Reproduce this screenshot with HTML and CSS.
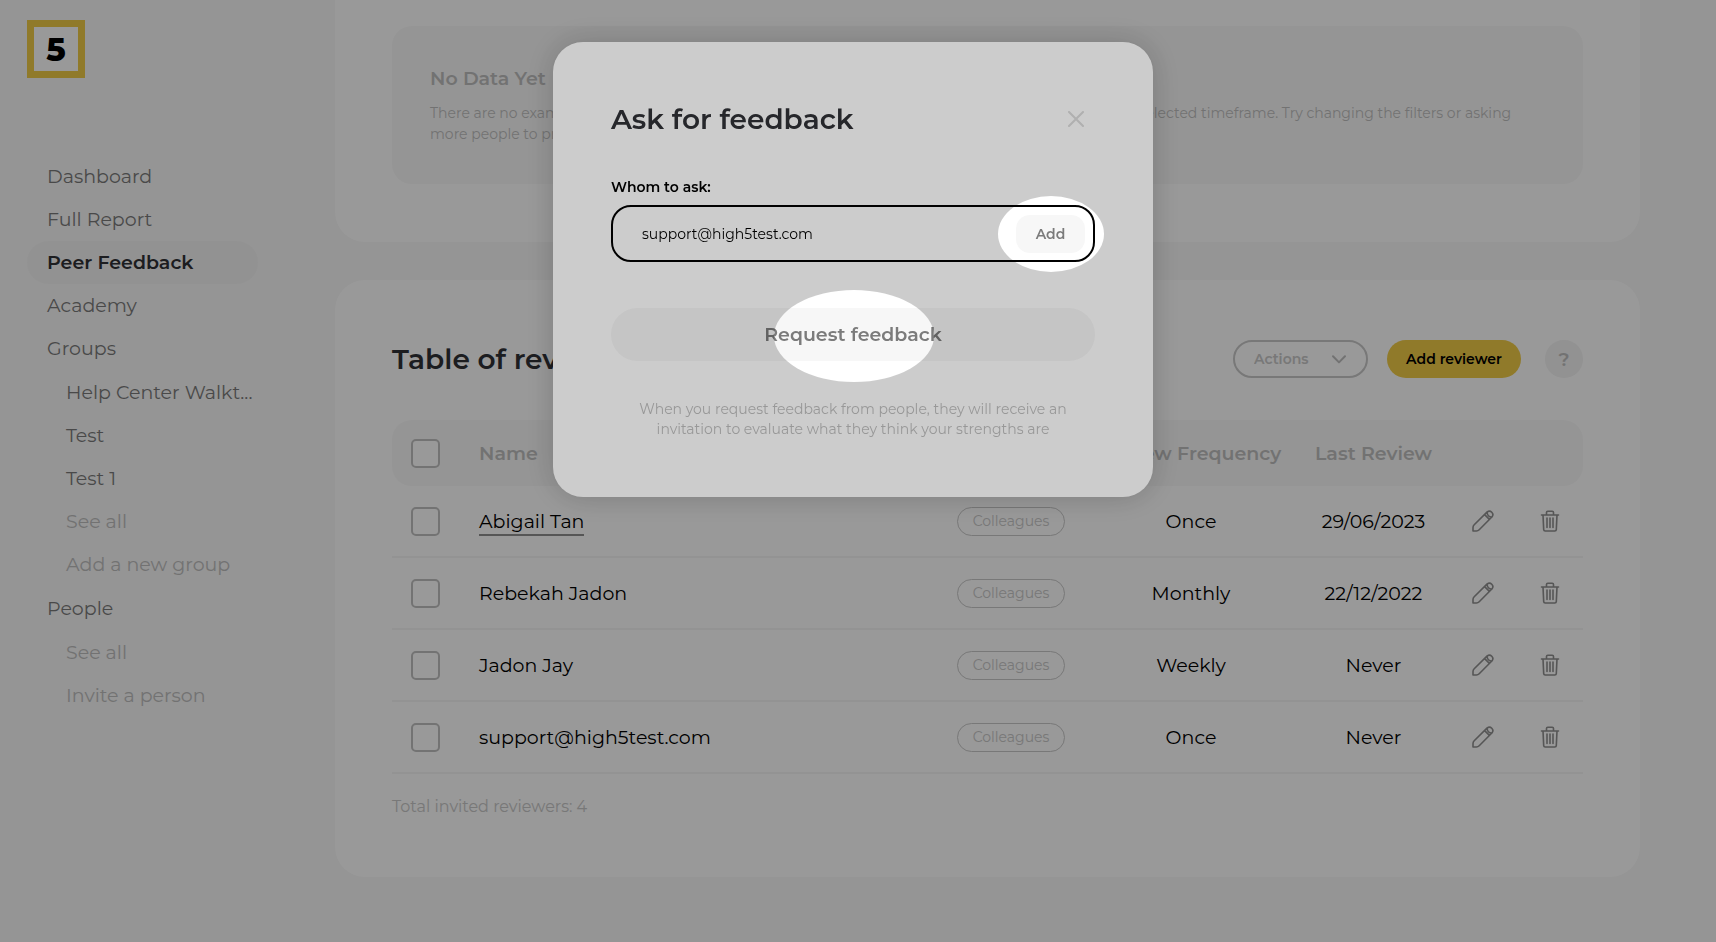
FILE: index.html
```html
<!DOCTYPE html>
<html lang="en">
    <head>
        <meta charset="UTF-8">
        <meta name="viewport" content="width=device-width, initial-scale=1">
        <title>Peer Feedback</title>
        <link rel="stylesheet" href="styles.css">
    </head>
    <body>
        <!-- Shared icons -->
        <svg class="icon-defs" aria-hidden="true">
            <symbol id="icon-edit" viewBox="0 0 22 22">
                <path d="M1 21V17.6Q1 16 2.2 14.8L15.2 1.9a3.5 3.5 0 0 1 4.9 4.9L7.2 19.8Q6 21 4.4 21Z M12.6 4.6 17.4 9.4 M15.2 2.2c-.4 2.6 2 5.2 4.8 4.8"/>
            </symbol>
            <symbol id="icon-trash" viewBox="0 0 22 22">
                <path d="M2.5 5h17 M4 5 4.7 19.6q.1 1.4 1.5 1.4h9.6q1.4 0 1.5-1.4L18 5 M7.5 4.8V2.5q0-1.3 1.3-1.3h4.4q1.3 0 1.3 1.3v2.3 M8 8v9.5 M11 8v9.5 M14 8v9.5"/>
            </symbol>
        </svg>

        <div class="page">
            <aside class="sidebar">
                <a class="logo" href="#">5</a>
                <nav>
                    <ul class="menu">
                        <li><a href="#">Dashboard</a></li>
                        <li><a href="#">Full Report</a></li>
                        <li><a class="active" href="#">Peer Feedback</a></li>
                        <li><a href="#">Academy</a></li>
                        <li>
                            <a href="#">Groups</a>
                            <ul class="submenu">
                                <li><a href="#">Help Center Walkt...</a></li>
                                <li><a href="#">Test</a></li>
                                <li><a href="#">Test 1</a></li>
                                <li><a class="muted" href="#">See all</a></li>
                                <li><a class="muted" href="#">Add a new group</a></li>
                            </ul>
                        </li>
                        <li>
                            <a href="#">People</a>
                            <ul class="submenu">
                                <li><a class="muted" href="#">See all</a></li>
                                <li><a class="muted" href="#">Invite a person</a></li>
                            </ul>
                        </li>
                    </ul>
                </nav>
            </aside>

            <main>
                <section class="card card-top">
                    <div class="no-data">
                        <h3>No Data Yet</h3>
                        <p>There are no examples of how the other people near you see your strengths that match the currently selected timeframe. Try changing the filters or asking<br>more people to provide their feedback.</p>
                    </div>
                </section>

                <section class="card card-table">
                    <div class="card-header">
                        <h2>Table of reviewers</h2>
                        <div class="actions">
                            <select aria-label="Actions">
                                <option>Actions</option>
                            </select>
                            <svg class="chevron" viewBox="0 0 14 9" aria-hidden="true"><path d="M1 1.2 7 7.4 13 1.2"/></svg>
                        </div>
                        <button class="add-reviewer" type="button">Add reviewer</button>
                        <button class="help" type="button">?</button>
                    </div>

                    <table>
                        <thead>
                            <tr>
                                <th class="col-check"><input type="checkbox" aria-label="Select all"></th>
                                <th class="col-name">Name</th>
                                <th class="col-relation">Relation</th>
                                <th class="col-frequency">Review Frequency</th>
                                <th class="col-last">Last Review</th>
                                <th class="col-icon"></th>
                                <th class="col-icon"></th>
                            </tr>
                        </thead>
                        <tbody>
                            <tr>
                                <td><input type="checkbox" aria-label="Select Abigail Tan"></td>
                                <td class="name"><a href="#">Abigail Tan</a></td>
                                <td><span class="tag">Colleagues</span></td>
                                <td>Once</td>
                                <td>29/06/2023</td>
                                <td><button class="icon-button" type="button" aria-label="Edit"><svg><use href="#icon-edit"/></svg></button></td>
                                <td><button class="icon-button" type="button" aria-label="Delete"><svg><use href="#icon-trash"/></svg></button></td>
                            </tr>
                            <tr>
                                <td><input type="checkbox" aria-label="Select Rebekah Jadon"></td>
                                <td class="name">Rebekah Jadon</td>
                                <td><span class="tag">Colleagues</span></td>
                                <td>Monthly</td>
                                <td>22/12/2022</td>
                                <td><button class="icon-button" type="button" aria-label="Edit"><svg><use href="#icon-edit"/></svg></button></td>
                                <td><button class="icon-button" type="button" aria-label="Delete"><svg><use href="#icon-trash"/></svg></button></td>
                            </tr>
                            <tr>
                                <td><input type="checkbox" aria-label="Select Jadon Jay"></td>
                                <td class="name">Jadon Jay</td>
                                <td><span class="tag">Colleagues</span></td>
                                <td>Weekly</td>
                                <td>Never</td>
                                <td><button class="icon-button" type="button" aria-label="Edit"><svg><use href="#icon-edit"/></svg></button></td>
                                <td><button class="icon-button" type="button" aria-label="Delete"><svg><use href="#icon-trash"/></svg></button></td>
                            </tr>
                            <tr>
                                <td><input type="checkbox" aria-label="Select support@high5test.com"></td>
                                <td class="name">support@high5test.com</td>
                                <td><span class="tag">Colleagues</span></td>
                                <td>Once</td>
                                <td>Never</td>
                                <td><button class="icon-button" type="button" aria-label="Edit"><svg><use href="#icon-edit"/></svg></button></td>
                                <td><button class="icon-button" type="button" aria-label="Delete"><svg><use href="#icon-trash"/></svg></button></td>
                            </tr>
                        </tbody>
                    </table>
                    <p class="total">Total invited reviewers: 4</p>
                </section>
            </main>
        </div>

        <div class="backdrop">
            <div class="modal" role="dialog" aria-labelledby="modal-title">
                <div class="modal-header">
                    <h2 id="modal-title">Ask for feedback</h2>
                    <button class="close" type="button" aria-label="Close">
                        <svg viewBox="0 0 16 16"><path d="M1 1 15 15 M15 1 1 15"/></svg>
                    </button>
                </div>
                <form>
                    <label for="email">Whom to ask:</label>
                    <div class="email-field">
                        <input id="email" name="email" type="text" value="support@high5test.com">
                        <button class="add" type="button">Add</button>
                    </div>
                    <button class="request" type="button">Request feedback</button>
                </form>
                <p class="hint">When you request feedback from people, they will receive an<br>invitation to evaluate what they think your strengths are</p>
            </div>
        </div>

        <!-- Shade over everything, with an opening around each button of the walkthrough -->
        <svg class="spotlight" aria-hidden="true">
            <mask id="openings">
                <rect width="100%" height="100%" fill="white"/>
                <svg x="50%" overflow="visible">
                    <ellipse cx="193" cy="234" rx="53" ry="38" fill="black"/>
                    <ellipse cx="-4" cy="336" rx="80" ry="46" fill="black"/>
                </svg>
            </mask>
            <rect width="100%" height="100%" fill="black" fill-opacity="0.2" mask="url(#openings)"/>
        </svg>
    </body>
</html>
```
FILE: styles.css
```css
* {
    box-sizing: border-box;
}

body {
    margin: 0;
    background-color: #f8f8f8;
    color: black;
    font-family: Montserrat, Inter, sans-serif;
    font-size: 19px;
}

h2, h3, p, ul {
    margin: 0;
    padding: 0;
}

h2 {
    color: #303136;
    font-size: 28px;
    font-weight: 600;
    line-height: 38px;
}

ul {
    list-style: none;
}

a {
    color: inherit;
    text-decoration: none;
}

button, input, select {
    font-family: inherit;
}

button {
    padding: 0;
    border: none;
    cursor: pointer;
}

svg {
    display: block;
    fill: none;
    stroke-linecap: round;
    stroke-linejoin: round;
}

.icon-defs {
    position: absolute;
    width: 0;
    height: 0;
}

.page {
    display: flex;
    min-height: 100vh;
}

/* Sidebar */

.sidebar {
    width: 335px;
    flex-shrink: 0;
    padding: 20px 77px 0 27px;
}

.logo {
    display: flex;
    align-items: center;
    justify-content: center;
    width: 58px;
    height: 58px;
    margin-bottom: 77px;
    border: 7px solid #f0cb46;
    background-color: white;
    font-size: 32px;
    font-weight: 800;
}

.menu a {
    display: block;
    padding-left: 20px;
    border-radius: 22px;
    color: #7b7b7b;
    line-height: 43px;
    white-space: nowrap;
}

.menu a.active {
    background-color: #f4f4f4;
    color: #303136;
    font-weight: 600;
}

.menu a.muted {
    color: #bfbfbf;
}

.submenu {
    margin: 1px 0;
    padding-left: 19px;
}

/* Cards */

main {
    flex: 1;
    padding-right: 76px;
}

.card {
    padding: 58px 57px;
    border-radius: 30px;
    background-color: white;
}

.card-top {
    margin-bottom: 38px;
    padding-top: 26px;
    border-radius: 0 0 30px 30px;
}

.card-table {
    padding-top: 60px;
}

.no-data {
    min-height: 158px;
    padding: 39px 38px;
    border-radius: 20px;
    background-color: #f9f9f9;
    color: #bfbfbf;
    font-size: 14px;
    line-height: 21px;
}

.no-data h3 {
    margin-bottom: 10px;
    font-size: 19px;
    font-weight: 600;
    line-height: 28px;
}

.card-header {
    display: flex;
    align-items: center;
    margin-bottom: 42px;
}

.card-header h2 {
    flex: 1;
}

.actions {
    position: relative;
    margin-right: 19px;
}

.actions select {
    width: 135px;
    height: 38px;
    padding: 0 19px;
    border: 2px solid #c8c8c8;
    border-radius: 19px;
    background-color: white;
    color: #c8c8c8;
    font-size: 14px;
    font-weight: 600;
    appearance: none;
}

.chevron {
    position: absolute;
    top: 15px;
    right: 22px;
    width: 14px;
    height: 9px;
    stroke: #bfbfbf;
    stroke-width: 2;
    pointer-events: none;
}

.add-reviewer {
    width: 134px;
    height: 38px;
    margin-right: 24px;
    border-radius: 19px;
    background-color: #f0cb46;
    color: black;
    font-size: 14px;
    font-weight: 600;
}

.help {
    width: 38px;
    height: 38px;
    border-radius: 50%;
    background-color: #f3f3f3;
    color: #bfbfbf;
    font-size: 19px;
    font-weight: 600;
}

/* Table */

table {
    width: 100%;
    border-spacing: 0;
    table-layout: fixed;
    text-align: center;
}

th {
    height: 66px;
    padding: 0;
    background-color: #f9f9f9;
    color: #bfbfbf;
    font-weight: 600;
    white-space: nowrap;
}

th:first-child {
    border-radius: 20px 0 0 20px;
}

th:last-child {
    border-radius: 0 20px 20px 0;
}

td {
    height: 72px;
    padding: 0;
    border-bottom: 2px solid #f6f6f6;
}

.col-check {
    width: 87px;
}

.col-name, .name {
    text-align: left;
}

.col-relation {
    width: 146px;
}

.col-frequency {
    width: 214px;
}

.col-last {
    width: 151px;
}

.col-icon {
    width: 67px;
}

.name a {
    padding-bottom: 1px;
    border-bottom: 2px solid #8f8f8f;
}

table input {
    display: block;
    width: 29px;
    height: 29px;
    margin: 0 0 0 19px;
    border: 2px solid #c0c0c0;
    border-radius: 5px;
    background-color: white;
    appearance: none;
}

.tag {
    display: inline-block;
    width: 108px;
    border: 1px solid #c8c8c8;
    border-radius: 15px;
    color: #c8c8c8;
    font-size: 14px;
    line-height: 27px;
    vertical-align: middle;
}

.icon-button {
    display: block;
    margin: 0 auto;
    background: none;
}

.icon-button svg {
    width: 22px;
    height: 22px;
    stroke: #8f8f8f;
    stroke-width: 1.6;
}

.total {
    margin-top: 21px;
    color: #c8c8c8;
    font-size: 16px;
    line-height: 24px;
}

/* Modal */

.backdrop {
    position: fixed;
    inset: 0;
    padding: 42px 10px 0 0;
    background-color: rgba(0, 0, 0, 0.25);
}

.modal {
    width: 600px;
    margin: 0 auto;
    padding: 58px;
    border-radius: 30px;
    background-color: white;
    box-shadow: 0 0 30px rgba(0, 0, 0, 0.2);
}

.modal-header {
    display: flex;
    align-items: center;
    justify-content: space-between;
    margin-bottom: 37px;
}

.close {
    margin-right: 11px;
    background: none;
}

.close svg {
    width: 16px;
    height: 16px;
    stroke: #dcdcdc;
    stroke-width: 2;
}

.modal label {
    display: block;
    margin-bottom: 6px;
    font-size: 14px;
    font-weight: 600;
    line-height: 24px;
}

.email-field {
    display: flex;
    align-items: center;
    height: 57px;
    margin-bottom: 46px;
    padding: 0 8px 0 29px;
    border: 2px solid black;
    border-radius: 20px;
}

.email-field input {
    flex: 1;
    min-width: 0;
    padding: 0;
    border: none;
    outline: none;
    background: none;
    font-size: 14px;
}

.add {
    width: 69px;
    height: 38px;
    border-radius: 14px;
    background-color: #f7f7f7;
    color: #7b7b7b;
    font-size: 14px;
    font-weight: 600;
}

.request {
    width: 100%;
    height: 53px;
    border-radius: 27px;
    background-color: #f7f7f7;
    color: #7b7b7b;
    font-size: 19px;
    font-weight: 600;
}

.hint {
    margin-top: 38px;
    color: #bfbfbf;
    font-size: 14px;
    line-height: 20px;
    text-align: center;
}

.spotlight {
    position: fixed;
    inset: 0;
    width: 100%;
    height: 100%;
    pointer-events: none;
}
```
